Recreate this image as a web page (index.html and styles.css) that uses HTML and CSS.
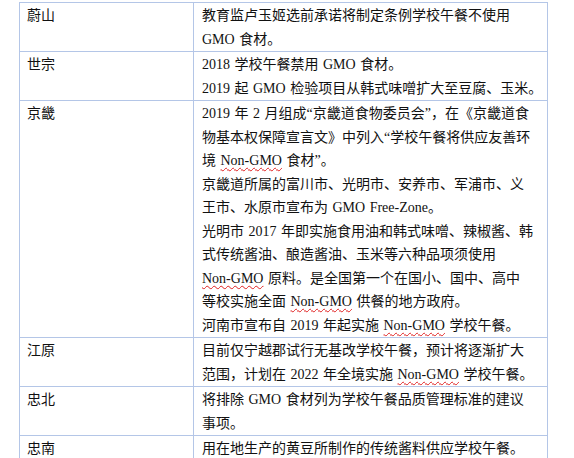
FILE: index.html
```html
<!DOCTYPE html>
<html lang="zh">
<head>
<meta charset="utf-8">
<link rel="stylesheet" href="styles.css">
</head>
<body>
<div class="wrap">
<table class="grid">
  <tr>
    <td class="region">蔚山</td>
    <td class="policy"><p>教育监卢玉姬选前承诺将制定条例学校午餐不使用<br>GMO 食材。</p></td>
  </tr>
  <tr>
    <td class="region">世宗</td>
    <td class="policy"><p>2018 学校午餐禁用 GMO 食材。</p><p>2019 起 GMO 检验项目从韩式味噌扩大至豆腐、玉米。</p></td>
  </tr>
  <tr>
    <td class="region">京畿</td>
    <td class="policy">
      <p>2019 年 2 月组成“京畿道食物委员会”，在《京畿道食<br>物基本权保障宣言文》中列入“学校午餐将供应友善环<br>境 <span class="sp">Non-GMO</span> 食材”。</p>
      <p>京畿道所属的富川市、光明市、安养市、军浦市、义<br>王市、水原市宣布为 GMO Free-Zone。</p>
      <p>光明市 2017 年即实施食用油和韩式味噌、辣椒酱、韩<br>式传统酱油、酿造酱油、玉米等六种品项须使用<br><span class="sp">Non-GMO</span> 原料。是全国第一个在国小、国中、高中<br>等校实施全面 <span class="sp">Non-GMO</span> 供餐的地方政府。</p>
      <p>河南市宣布自 2019 年起实施 <span class="sp">Non-GMO</span> 学校午餐。</p>
    </td>
  </tr>
  <tr>
    <td class="region">江原</td>
    <td class="policy"><p>目前仅宁越郡试行无基改学校午餐，预计将逐渐扩大<br>范围，计划在 2022 年全境实施 <span class="sp">Non-GMO</span> 学校午餐。</p></td>
  </tr>
  <tr>
    <td class="region">忠北</td>
    <td class="policy"><p>将排除 GMO 食材列为学校午餐品质管理标准的建议<br>事项。</p></td>
  </tr>
  <tr>
    <td class="region">忠南</td>
    <td class="policy"><p>用在地生产的黄豆所制作的传统酱料供应学校午餐。</p></td>
  </tr>
</table>
</div>
</body>
</html>
```

FILE: styles.css
```css
html, body {
  margin: 0;
  padding: 0;
  background: #ffffff;
}
.wrap {
  padding: 2px 0 0 19px;
}
.grid {
  border-collapse: collapse;
  width: 529px;
  table-layout: fixed;
  font-family: "Liberation Serif", "Noto Sans CJK SC", serif;
  font-size: 14px;
  color: #111;
}
.grid td {
  border: 1px solid #b4c6e7;
  vertical-align: top;
  padding: 1px 7px 0 7px;
  line-height: 23.5px;
  white-space: nowrap;
  word-spacing: 1px;
}
.grid td.region {
  width: 159px;
}
.grid td.policy {
  padding-left: 8px;
}
.grid p {
  margin: 0;
}
.sp {
  text-decoration: underline wavy #e02020;
  text-decoration-thickness: 1px;
  text-underline-offset: 2px;
}
```
